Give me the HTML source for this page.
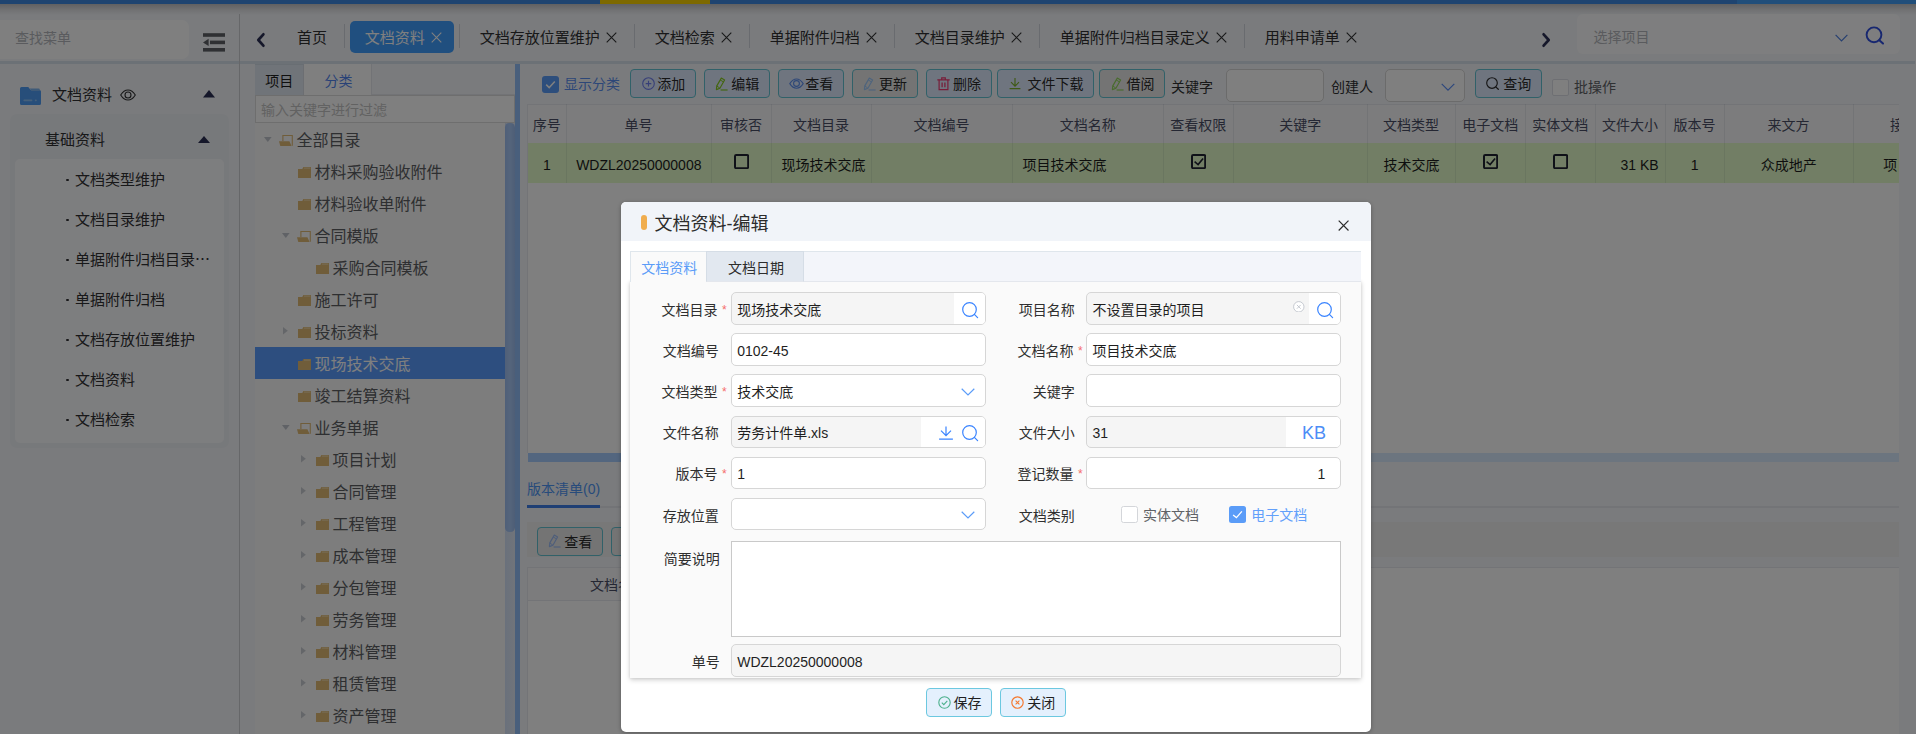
<!DOCTYPE html>
<html lang="zh-CN"><head><meta charset="utf-8"><title>文档资料</title>
<style>
html,body{margin:0;padding:0}
body{width:1916px;height:734px;overflow:hidden;position:relative;background:#f5f7fa;font-family:"Liberation Sans","Noto Sans CJK SC",sans-serif;}
#app,#dlg,#mask{position:absolute;left:0;top:0;width:1916px;height:734px;overflow:hidden}
#app div,#app svg,#app span.t,#dlg div,#dlg svg,#dlg span.t{position:absolute;box-sizing:border-box}
span.t{white-space:nowrap;display:block}
#mask{background:rgba(0,0,0,.5)}
.btn{border:1px solid #62c3d2;border-radius:4px;background:#dfeaff}
.inp{border:1px solid #d6d6d6;border-radius:5px;background:#fff}
.dis{background:#f5f5f5}

</style></head><body>
<div id="app">
<div style="left:0px;top:0px;width:1916px;height:4px;background:#3c88e0"></div>
<div style="left:600px;top:0px;width:110px;height:4px;background:#fad200"></div>
<div style="left:1737px;top:0px;width:179px;height:4px;background:#409cf4"></div>
<div style="left:0px;top:4px;width:1916px;height:11px;background:linear-gradient(rgba(0,0,0,.22),rgba(0,0,0,.08) 55%,rgba(0,0,0,0))"></div>
<div style="left:0px;top:20px;width:189px;height:39px;background:#fff;border-radius:0 7px 7px 0"></div>
<span class="t" style="top:28.49px;font-size:14px;line-height:20px;color:#b4b7bd;left:15px;">查找菜单</span>
<svg style="left:202px;top:32px;" width="24" height="21" viewBox="0 0 24 21"><g fill="#5e6166"><rect x="1" y="1.2" width="22" height="3.6"/><rect x="8" y="8.6" width="15" height="3.6"/><rect x="1" y="16" width="22" height="3.6"/><path d="M1 10.4 L6.6 6.8 V14z"/></g></svg>
<div style="left:0px;top:61px;width:1915px;height:3px;background:#d9e2ec"></div>
<div style="left:239px;top:14px;width:1.2px;height:720px;background:#cdced2"></div>
<svg style="left:20px;top:87px;" width="21" height="18" viewBox="0 0 21 18"><path fill="#4f9cf5" d="M1.500 0h6.800l2.300 3H19.500a1.500 1.500 0 0 1 1.500 1.500v12a1.500 1.500 0 0 1-1.500 1.500H1.500a1.500 1.500 0 0 1-1.500-1.500V1.500a1.500 1.500 0 0 1 1.500-1.500z"/><path fill="#7db4f0" d="M9.6 1.6h9a1.2 1.2 0 0 1 1.2 1.2V4H11.4z"/><rect x="3.4" y="12.6" width="9" height="1.6" rx=".8" fill="#8cc0f5"/><rect x="14.8" y="12.6" width="2" height="1.6" rx=".8" fill="#8cc0f5"/></svg>
<span class="t" style="top:84.73px;font-size:15px;line-height:20px;color:#303133;left:52px;">文档资料</span>
<svg style="left:120px;top:88.5px;" width="16" height="12" viewBox="0 0 16 12"><g fill="none" stroke="#303133" stroke-width="1.1"><path d="M.7 6C3 2.2 5.6 1 8 1s5 1.2 7.3 5C13 9.800 10.400 11 8 11S3 9.800.7 6z"/><circle cx="8" cy="6" r="3"/></g></svg>
<svg style="left:203px;top:90px;" width="12" height="8" viewBox="0 0 12 8"><path fill="#2b2f54" d="M6 0L12 7.400H0z"/></svg>
<div style="left:10px;top:114px;width:219px;height:334px;background:#eff2f7;border-radius:7px"></div>
<span class="t" style="top:130.03px;font-size:15px;line-height:20px;color:#303133;left:45px;">基础资料</span>
<svg style="left:198px;top:135.5px;" width="12" height="8" viewBox="0 0 12 8"><path fill="#2b2f54" d="M6 0L12 7H0z"/></svg>
<div style="left:15px;top:159px;width:209px;height:284px;background:#fbfcfe;border-radius:5px"></div>
<div style="left:66.2px;top:178.70000000000002px;width:2.4px;height:2.4px;background:#303133;border-radius:50%"></div>
<span class="t" style="top:169.83px;font-size:15px;line-height:20px;color:#303133;left:75px;">文档类型维护</span>
<div style="left:66.2px;top:218.70000000000002px;width:2.4px;height:2.4px;background:#303133;border-radius:50%"></div>
<span class="t" style="top:209.83px;font-size:15px;line-height:20px;color:#303133;left:75px;">文档目录维护</span>
<div style="left:66.2px;top:258.7px;width:2.4px;height:2.4px;background:#303133;border-radius:50%"></div>
<span class="t" style="top:249.83px;font-size:15px;line-height:20px;color:#303133;left:75px;">单据附件归档目录⋯</span>
<div style="left:66.2px;top:298.7px;width:2.4px;height:2.4px;background:#303133;border-radius:50%"></div>
<span class="t" style="top:289.82px;font-size:15px;line-height:20px;color:#303133;left:75px;">单据附件归档</span>
<div style="left:66.2px;top:338.7px;width:2.4px;height:2.4px;background:#303133;border-radius:50%"></div>
<span class="t" style="top:329.82px;font-size:15px;line-height:20px;color:#303133;left:75px;">文档存放位置维护</span>
<div style="left:66.2px;top:378.7px;width:2.4px;height:2.4px;background:#303133;border-radius:50%"></div>
<span class="t" style="top:369.82px;font-size:15px;line-height:20px;color:#303133;left:75px;">文档资料</span>
<div style="left:66.2px;top:418.7px;width:2.4px;height:2.4px;background:#303133;border-radius:50%"></div>
<span class="t" style="top:409.82px;font-size:15px;line-height:20px;color:#303133;left:75px;">文档检索</span>
<svg style="left:255px;top:32px;" width="12" height="16" viewBox="0 0 12 16"><path d="M8.400 2.300L3.300 8l5.100 5.700" fill="none" stroke="#2b2f54" stroke-width="2.700" stroke-linecap="round" stroke-linejoin="round"/></svg>
<svg style="left:1540px;top:32px;" width="12" height="16" viewBox="0 0 12 16"><path d="M3.600 2.300L8.700 8l-5.100 5.700" fill="none" stroke="#2b2f54" stroke-width="2.700" stroke-linecap="round" stroke-linejoin="round"/></svg>
<span class="t" style="top:28.12px;font-size:15px;line-height:20px;color:#303133;left:297.0px;">首页</span>
<div style="left:344.0px;top:24px;width:1px;height:24px;background:#d3d7de"></div>
<div style="left:350.0px;top:21px;width:104px;height:32px;background:#409eff;border-radius:5px"></div>
<span class="t" style="top:28.12px;font-size:15px;line-height:20px;color:#fff;left:364.79999999999995px;">文档资料</span>
<svg style="left:430.59999999999997px;top:32.2px;" width="11" height="11" viewBox="0 0 11 11"><path d="M.7.7l9.600 9.600M10.300.7L.7 10.300" stroke="#fff" stroke-width="1.100" fill="none"/></svg>
<div style="left:459.0px;top:24px;width:1px;height:24px;background:#d3d7de"></div>
<span class="t" style="top:28.12px;font-size:15px;line-height:20px;color:#303133;left:479.79999999999995px;">文档存放位置维护</span>
<svg style="left:605.5999999999999px;top:32.2px;" width="11" height="11" viewBox="0 0 11 11"><path d="M.7.7l9.600 9.600M10.300.7L.7 10.300" stroke="#303133" stroke-width="1.100" fill="none"/></svg>
<div style="left:634.0px;top:24px;width:1px;height:24px;background:#d3d7de"></div>
<span class="t" style="top:28.12px;font-size:15px;line-height:20px;color:#303133;left:654.8px;">文档检索</span>
<svg style="left:720.5999999999999px;top:32.2px;" width="11" height="11" viewBox="0 0 11 11"><path d="M.7.7l9.600 9.600M10.300.7L.7 10.300" stroke="#303133" stroke-width="1.100" fill="none"/></svg>
<div style="left:749.0px;top:24px;width:1px;height:24px;background:#d3d7de"></div>
<span class="t" style="top:28.12px;font-size:15px;line-height:20px;color:#303133;left:769.8px;">单据附件归档</span>
<svg style="left:865.5999999999999px;top:32.2px;" width="11" height="11" viewBox="0 0 11 11"><path d="M.7.7l9.600 9.600M10.300.7L.7 10.300" stroke="#303133" stroke-width="1.100" fill="none"/></svg>
<div style="left:894.0px;top:24px;width:1px;height:24px;background:#d3d7de"></div>
<span class="t" style="top:28.12px;font-size:15px;line-height:20px;color:#303133;left:914.8px;">文档目录维护</span>
<svg style="left:1010.5999999999999px;top:32.2px;" width="11" height="11" viewBox="0 0 11 11"><path d="M.7.7l9.600 9.600M10.300.7L.7 10.300" stroke="#303133" stroke-width="1.100" fill="none"/></svg>
<div style="left:1039.0px;top:24px;width:1px;height:24px;background:#d3d7de"></div>
<span class="t" style="top:28.12px;font-size:15px;line-height:20px;color:#303133;left:1059.8000000000002px;">单据附件归档目录定义</span>
<svg style="left:1215.6000000000001px;top:32.2px;" width="11" height="11" viewBox="0 0 11 11"><path d="M.7.7l9.600 9.600M10.300.7L.7 10.300" stroke="#303133" stroke-width="1.100" fill="none"/></svg>
<div style="left:1244.0px;top:24px;width:1px;height:24px;background:#d3d7de"></div>
<span class="t" style="top:28.12px;font-size:15px;line-height:20px;color:#303133;left:1264.8000000000002px;">用料申请单</span>
<svg style="left:1345.6000000000001px;top:32.2px;" width="11" height="11" viewBox="0 0 11 11"><path d="M.7.7l9.600 9.600M10.300.7L.7 10.300" stroke="#303133" stroke-width="1.100" fill="none"/></svg>
<div style="left:1577px;top:14px;width:323px;height:40px;background:#fff;border-radius:6px;opacity:.75"></div>
<span class="t" style="top:27.49px;font-size:14px;line-height:20px;color:#b4b7bd;left:1593.5px;">选择项目</span>
<svg style="left:1835px;top:33.5px;" width="13" height="8" viewBox="0 0 13 8"><path d="M.6.8L6.500 6.800 12.400.8" fill="none" stroke="#4d7fe0" stroke-width="1.200"/></svg>
<svg style="left:1865px;top:26px;" width="20" height="19" viewBox="0 0 20 19"><circle cx="9" cy="8.800" r="7.400" fill="none" stroke="#2f4ee0" stroke-width="1.900"/><path d="M14.300 14.200L18 17.600" stroke="#2f4ee0" stroke-width="2" stroke-linecap="round"/></svg>
<div style="left:255px;top:64px;width:260px;height:31px;background:#f5f7fa;border-bottom:1px solid #e4e7ed"></div>
<div style="left:255px;top:64px;width:48.5px;height:30.5px;background:#e1e9f2;border-right:1px solid #d8dde5;border-top:1px solid #d3dce6"></div>
<span class="t" style="top:71.09px;font-size:14px;line-height:20px;color:#1f1f1f;left:265.2px;">项目</span>
<div style="left:303.5px;top:64px;width:68.5px;height:30.5px;background:#fff;border-right:1px solid #e4e7ed"></div>
<span class="t" style="top:71.09px;font-size:14px;line-height:20px;color:#5284ee;left:324.5px;">分类</span>
<div style="left:255px;top:123px;width:250px;height:611px;background:#fafafa"></div>
<div style="left:255px;top:95px;width:260px;height:28px;background:#fff;border:1px solid #dcdcdc"></div>
<span class="t" style="top:100.49px;font-size:14px;line-height:20px;color:#c4c4c4;left:261px;">输入关键字进行过滤</span>
<div style="left:505px;top:123px;width:10px;height:611px;background:linear-gradient(90deg,#d4e2f8,#e2e9f5)"></div>
<div style="left:505.2px;top:123px;width:9.4px;height:408.6px;background:linear-gradient(90deg,#a0c0f2,#aacaf8 50%,#9cbcee);border-radius:4.5px"></div>
<div style="left:515px;top:64px;width:5px;height:670px;background:#93bff8"></div>
<svg style="left:263.8px;top:137.29999999999998px;" width="8" height="5.5" viewBox="0 0 8 5.5"><path fill="#c0c4cc" d="M0 0h7.600L3.800 5z"/></svg>
<svg style="left:279.1px;top:135.0px;" width="14.2" height="11" viewBox="0 0 14.2 11"><path fill="none" stroke="#e0ba74" stroke-width="1.100" d="M3.900 6V.55h9.400v10.200"/><path fill="#e0ba74" d="M0 6.200h10.400l2.200 4.700H1.300z"/></svg>
<span class="t" style="top:129.96px;font-size:16px;line-height:22px;color:#5c5e62;left:296.4px;">全部目录</span>
<svg style="left:298.09999999999997px;top:167.1px;" width="13.2" height="11" viewBox="0 0 13.2 11"><path fill="#e0ba74" d="M0 2.100h4.300L5.400 0H13v10.900H0z"/><rect x="6" y=".55" width="6.400" height="1.050" fill="#f0dcb0"/></svg>
<span class="t" style="top:161.96px;font-size:16px;line-height:22px;color:#5c5e62;left:314.4px;">材料采购验收附件</span>
<svg style="left:298.09999999999997px;top:199.1px;" width="13.2" height="11" viewBox="0 0 13.2 11"><path fill="#e0ba74" d="M0 2.100h4.300L5.400 0H13v10.900H0z"/><rect x="6" y=".55" width="6.400" height="1.050" fill="#f0dcb0"/></svg>
<span class="t" style="top:193.96px;font-size:16px;line-height:22px;color:#5c5e62;left:314.4px;">材料验收单附件</span>
<svg style="left:281.8px;top:233.29999999999998px;" width="8" height="5.5" viewBox="0 0 8 5.5"><path fill="#c0c4cc" d="M0 0h7.600L3.800 5z"/></svg>
<svg style="left:297.1px;top:231.0px;" width="14.2" height="11" viewBox="0 0 14.2 11"><path fill="none" stroke="#e0ba74" stroke-width="1.100" d="M3.900 6V.55h9.400v10.200"/><path fill="#e0ba74" d="M0 6.200h10.400l2.200 4.700H1.300z"/></svg>
<span class="t" style="top:225.96px;font-size:16px;line-height:22px;color:#5c5e62;left:314.4px;">合同模版</span>
<svg style="left:316.09999999999997px;top:263.09999999999997px;" width="13.2" height="11" viewBox="0 0 13.2 11"><path fill="#e0ba74" d="M0 2.100h4.300L5.400 0H13v10.900H0z"/><rect x="6" y=".55" width="6.400" height="1.050" fill="#f0dcb0"/></svg>
<span class="t" style="top:257.96px;font-size:16px;line-height:22px;color:#5c5e62;left:332.4px;">采购合同模板</span>
<svg style="left:298.09999999999997px;top:295.09999999999997px;" width="13.2" height="11" viewBox="0 0 13.2 11"><path fill="#e0ba74" d="M0 2.100h4.300L5.400 0H13v10.900H0z"/><rect x="6" y=".55" width="6.400" height="1.050" fill="#f0dcb0"/></svg>
<span class="t" style="top:289.96px;font-size:16px;line-height:22px;color:#5c5e62;left:314.4px;">施工许可</span>
<svg style="left:283.4px;top:326.7px;" width="5.5" height="8" viewBox="0 0 5.5 8"><path fill="#c9ccd3" d="M0 0v7.600L4.800 3.800z"/></svg>
<svg style="left:298.09999999999997px;top:327.09999999999997px;" width="13.2" height="11" viewBox="0 0 13.2 11"><path fill="#e0ba74" d="M0 2.100h4.300L5.400 0H13v10.900H0z"/><rect x="6" y=".55" width="6.400" height="1.050" fill="#f0dcb0"/></svg>
<span class="t" style="top:321.96px;font-size:16px;line-height:22px;color:#5c5e62;left:314.4px;">投标资料</span>
<div style="left:255px;top:347.09999999999997px;width:250px;height:31.6px;background:#5a9cff"></div>
<svg style="left:298.09999999999997px;top:359.09999999999997px;" width="13.2" height="11" viewBox="0 0 13.2 11"><path fill="#e0ba74" d="M0 2.100h4.300L5.400 0H13v10.900H0z"/><rect x="6" y=".55" width="6.400" height="1.050" fill="#f0dcb0"/></svg>
<span class="t" style="top:353.96px;font-size:16px;line-height:22px;color:#fff;left:314.4px;">现场技术交底</span>
<svg style="left:298.09999999999997px;top:391.09999999999997px;" width="13.2" height="11" viewBox="0 0 13.2 11"><path fill="#e0ba74" d="M0 2.100h4.300L5.400 0H13v10.900H0z"/><rect x="6" y=".55" width="6.400" height="1.050" fill="#f0dcb0"/></svg>
<span class="t" style="top:385.96px;font-size:16px;line-height:22px;color:#5c5e62;left:314.4px;">竣工结算资料</span>
<svg style="left:281.8px;top:425.3px;" width="8" height="5.5" viewBox="0 0 8 5.5"><path fill="#c0c4cc" d="M0 0h7.600L3.800 5z"/></svg>
<svg style="left:297.1px;top:423.0px;" width="14.2" height="11" viewBox="0 0 14.2 11"><path fill="none" stroke="#e0ba74" stroke-width="1.100" d="M3.900 6V.55h9.400v10.200"/><path fill="#e0ba74" d="M0 6.200h10.400l2.200 4.700H1.300z"/></svg>
<span class="t" style="top:417.96px;font-size:16px;line-height:22px;color:#5c5e62;left:314.4px;">业务单据</span>
<svg style="left:301.4px;top:454.7px;" width="5.5" height="8" viewBox="0 0 5.5 8"><path fill="#c9ccd3" d="M0 0v7.600L4.800 3.800z"/></svg>
<svg style="left:316.09999999999997px;top:455.09999999999997px;" width="13.2" height="11" viewBox="0 0 13.2 11"><path fill="#e0ba74" d="M0 2.100h4.300L5.400 0H13v10.900H0z"/><rect x="6" y=".55" width="6.400" height="1.050" fill="#f0dcb0"/></svg>
<span class="t" style="top:449.96px;font-size:16px;line-height:22px;color:#5c5e62;left:332.4px;">项目计划</span>
<svg style="left:301.4px;top:486.7px;" width="5.5" height="8" viewBox="0 0 5.5 8"><path fill="#c9ccd3" d="M0 0v7.600L4.800 3.800z"/></svg>
<svg style="left:316.09999999999997px;top:487.09999999999997px;" width="13.2" height="11" viewBox="0 0 13.2 11"><path fill="#e0ba74" d="M0 2.100h4.300L5.400 0H13v10.900H0z"/><rect x="6" y=".55" width="6.400" height="1.050" fill="#f0dcb0"/></svg>
<span class="t" style="top:481.96px;font-size:16px;line-height:22px;color:#5c5e62;left:332.4px;">合同管理</span>
<svg style="left:301.4px;top:518.7px;" width="5.5" height="8" viewBox="0 0 5.5 8"><path fill="#c9ccd3" d="M0 0v7.600L4.800 3.800z"/></svg>
<svg style="left:316.09999999999997px;top:519.1px;" width="13.2" height="11" viewBox="0 0 13.2 11"><path fill="#e0ba74" d="M0 2.100h4.300L5.400 0H13v10.900H0z"/><rect x="6" y=".55" width="6.400" height="1.050" fill="#f0dcb0"/></svg>
<span class="t" style="top:513.96px;font-size:16px;line-height:22px;color:#5c5e62;left:332.4px;">工程管理</span>
<svg style="left:301.4px;top:550.7px;" width="5.5" height="8" viewBox="0 0 5.5 8"><path fill="#c9ccd3" d="M0 0v7.600L4.800 3.800z"/></svg>
<svg style="left:316.09999999999997px;top:551.1px;" width="13.2" height="11" viewBox="0 0 13.2 11"><path fill="#e0ba74" d="M0 2.100h4.300L5.400 0H13v10.900H0z"/><rect x="6" y=".55" width="6.400" height="1.050" fill="#f0dcb0"/></svg>
<span class="t" style="top:545.96px;font-size:16px;line-height:22px;color:#5c5e62;left:332.4px;">成本管理</span>
<svg style="left:301.4px;top:582.7px;" width="5.5" height="8" viewBox="0 0 5.5 8"><path fill="#c9ccd3" d="M0 0v7.600L4.800 3.800z"/></svg>
<svg style="left:316.09999999999997px;top:583.1px;" width="13.2" height="11" viewBox="0 0 13.2 11"><path fill="#e0ba74" d="M0 2.100h4.300L5.400 0H13v10.900H0z"/><rect x="6" y=".55" width="6.400" height="1.050" fill="#f0dcb0"/></svg>
<span class="t" style="top:577.96px;font-size:16px;line-height:22px;color:#5c5e62;left:332.4px;">分包管理</span>
<svg style="left:301.4px;top:614.7px;" width="5.5" height="8" viewBox="0 0 5.5 8"><path fill="#c9ccd3" d="M0 0v7.600L4.800 3.800z"/></svg>
<svg style="left:316.09999999999997px;top:615.1px;" width="13.2" height="11" viewBox="0 0 13.2 11"><path fill="#e0ba74" d="M0 2.100h4.300L5.400 0H13v10.900H0z"/><rect x="6" y=".55" width="6.400" height="1.050" fill="#f0dcb0"/></svg>
<span class="t" style="top:609.96px;font-size:16px;line-height:22px;color:#5c5e62;left:332.4px;">劳务管理</span>
<svg style="left:301.4px;top:646.7px;" width="5.5" height="8" viewBox="0 0 5.5 8"><path fill="#c9ccd3" d="M0 0v7.600L4.800 3.800z"/></svg>
<svg style="left:316.09999999999997px;top:647.1px;" width="13.2" height="11" viewBox="0 0 13.2 11"><path fill="#e0ba74" d="M0 2.100h4.300L5.400 0H13v10.900H0z"/><rect x="6" y=".55" width="6.400" height="1.050" fill="#f0dcb0"/></svg>
<span class="t" style="top:641.96px;font-size:16px;line-height:22px;color:#5c5e62;left:332.4px;">材料管理</span>
<svg style="left:301.4px;top:678.7px;" width="5.5" height="8" viewBox="0 0 5.5 8"><path fill="#c9ccd3" d="M0 0v7.600L4.800 3.800z"/></svg>
<svg style="left:316.09999999999997px;top:679.1px;" width="13.2" height="11" viewBox="0 0 13.2 11"><path fill="#e0ba74" d="M0 2.100h4.300L5.400 0H13v10.900H0z"/><rect x="6" y=".55" width="6.400" height="1.050" fill="#f0dcb0"/></svg>
<span class="t" style="top:673.96px;font-size:16px;line-height:22px;color:#5c5e62;left:332.4px;">租赁管理</span>
<svg style="left:301.4px;top:710.7px;" width="5.5" height="8" viewBox="0 0 5.5 8"><path fill="#c9ccd3" d="M0 0v7.600L4.800 3.800z"/></svg>
<svg style="left:316.09999999999997px;top:711.1px;" width="13.2" height="11" viewBox="0 0 13.2 11"><path fill="#e0ba74" d="M0 2.100h4.300L5.400 0H13v10.900H0z"/><rect x="6" y=".55" width="6.400" height="1.050" fill="#f0dcb0"/></svg>
<span class="t" style="top:705.96px;font-size:16px;line-height:22px;color:#5c5e62;left:332.4px;">资产管理</span>
<div style="left:542px;top:76px;width:17px;height:17px;background:#5a9cf8;border-radius:3px"></div>
<svg style="left:545px;top:80px;" width="11" height="9" viewBox="0 0 11 9"><path d="M1.200 4.600l3 3L9.800 1.400" fill="none" stroke="#fff" stroke-width="1.500"/></svg>
<span class="t" style="top:74.49px;font-size:14px;line-height:20px;color:#5a8ff0;left:564px;">显示分类</span>
<div class="btn" style="left:630.2px;top:69.2px;width:65.7px;height:28.6px;"></div>
<svg style="left:641.8000000000001px;top:77.0px" width="13" height="13" viewBox="0 0 13 13"><circle cx="6.500" cy="6.600" r="5.800" fill="none" stroke="#6f7ff0" stroke-width="1.100"/><path d="M6.500 3.800v5.600M3.700 6.600h5.600" stroke="#6f7ff0" stroke-width="1.100"/></svg>
<span class="t" style="top:74.09px;font-size:14px;line-height:20px;color:#2b2b2b;left:657.3000000000001px;">添加</span>
<div class="btn" style="left:704.1px;top:69.2px;width:65.7px;height:28.6px;"></div>
<svg style="left:715.4px;top:76.5px" width="14" height="14" viewBox="0 0 14 14"><path d="M6.300 1.100l3.300 1.900-4.700 8.200-3.500 1.400.4-3.700z" fill="none" stroke="#86cc1e" stroke-width="1.150" stroke-linejoin="round"/><path d="M5.200 3l3.300 1.900M1.800 8.900l3.100 2.300" fill="none" stroke="#86cc1e" stroke-width="1"/><path d="M5.600 13h7" stroke="#86cc1e" stroke-width="1.150"/></svg>
<span class="t" style="top:74.09px;font-size:14px;line-height:20px;color:#2b2b2b;left:731.2px;">编辑</span>
<div class="btn" style="left:778.1px;top:69.2px;width:65.7px;height:28.6px;"></div>
<svg style="left:788.8000000000001px;top:78.1px" width="15" height="11" viewBox="0 0 15 11"><g fill="none" stroke="#5b8ff0" stroke-width="1.100"><path d="M.8 5.600C2.900 2.300 5.200 1 7.500 1s4.600 1.300 6.700 4.600C12.100 8.900 9.800 10.200 7.500 10.200S2.900 8.900.8 5.600z"/><circle cx="7.500" cy="5.500" r="2.900"/></g></svg>
<span class="t" style="top:74.09px;font-size:14px;line-height:20px;color:#2b2b2b;left:805.2px;">查看</span>
<div class="btn" style="left:852px;top:69.2px;width:65.7px;height:28.6px;background:#e8e8e8"></div>
<svg style="left:863.4px;top:76.5px" width="14" height="14" viewBox="0 0 14 14"><path d="M6.300 1.100l3.300 1.900-4.700 8.200-3.500 1.400.4-3.700z" fill="none" stroke="#9cc8fa" stroke-width="1.150" stroke-linejoin="round"/><path d="M5.200 3l3.300 1.900M1.800 8.900l3.100 2.300" fill="none" stroke="#9cc8fa" stroke-width="1"/><path d="M5.600 13h7" stroke="#9cc8fa" stroke-width="1.150"/></svg>
<span class="t" style="top:74.09px;font-size:14px;line-height:20px;color:#2b2b2b;left:879.1px;">更新</span>
<div class="btn" style="left:925.9px;top:69.2px;width:65.7px;height:28.6px;"></div>
<svg style="left:937.3px;top:76.8px" width="13" height="14" viewBox="0 0 13 14"><g fill="none" stroke="#f03a72" stroke-width="1.200"><path d="M.3 2.900h12.400M4.700 2.600V.9h3.600v1.700M2.100 3.200v9.400h8.800V3.200"/><path d="M5.100 5.400v4.800M7.900 5.400v4.800" stroke-width="1.300"/></g></svg>
<span class="t" style="top:74.09px;font-size:14px;line-height:20px;color:#2b2b2b;left:953.0px;">删除</span>
<div class="btn" style="left:997.1px;top:69.2px;width:96.5px;height:28.6px;"></div>
<svg style="left:1008.6px;top:77.0px" width="12.0" height="13.0" viewBox="0 0 12 13"><g fill="none" stroke="#7fb32a" stroke-width="1.150"><path d="M6 1v8.200M2 5.200l4 4 4-4M.6 11.600h10.800"/></g></svg>
<span class="t" style="top:74.09px;font-size:14px;line-height:20px;color:#2b2b2b;left:1027.6px;">文件下载</span>
<div class="btn" style="left:1099.3px;top:69.2px;width:65.6px;height:28.6px;background:#e8e8e8"></div>
<svg style="left:1110.6000000000001px;top:76.5px" width="14" height="14" viewBox="0 0 14 14"><path d="M6.300 1.100l3.300 1.900-4.700 8.200-3.500 1.400.4-3.700z" fill="none" stroke="#93d85c" stroke-width="1.150" stroke-linejoin="round"/><path d="M5.200 3l3.300 1.900M1.800 8.900l3.100 2.300" fill="none" stroke="#93d85c" stroke-width="1"/><path d="M5.600 13h7" stroke="#93d85c" stroke-width="1.150"/></svg>
<span class="t" style="top:74.09px;font-size:14px;line-height:20px;color:#2b2b2b;left:1126.3999999999999px;">借阅</span>
<span class="t" style="top:77.29px;font-size:14px;line-height:20px;color:#303133;left:1171px;">关键字</span>
<div class="inp" style="left:1226px;top:69px;width:98px;height:33px;background:#fff"></div>
<span class="t" style="top:77.29px;font-size:14px;line-height:20px;color:#303133;left:1331px;">创建人</span>
<div class="inp" style="left:1385px;top:69px;width:79.5px;height:33px;background:#fff"></div>
<svg style="left:1440.5px;top:83px;" width="14" height="8.5" viewBox="0 0 14 8.5"><path d="M.7.8L7 7.200 13.300.8" fill="none" stroke="#5b8ff9" stroke-width="1.200"/></svg>
<div class="btn" style="left:1475.2px;top:69.2px;width:66.4px;height:28.6px;"></div>
<svg style="left:1486.2px;top:77.0px" width="13" height="13" viewBox="0 0 13 13"><circle cx="6" cy="6" r="5.300" fill="none" stroke="#2b2b2b" stroke-width="1.15"/><path d="M10 10.100l2.300 2.200" stroke="#2b2b2b" stroke-width="1.25" stroke-linecap="round"/></svg>
<span class="t" style="top:74.09px;font-size:14px;line-height:20px;color:#2b2b2b;left:1503.3px;">查询</span>
<div style="left:1552px;top:79px;width:16.5px;height:16.5px;background:#fff;border:1px solid #dcdfe6;border-radius:2px"></div>
<span class="t" style="top:77.29px;font-size:14px;line-height:20px;color:#606266;left:1574px;">批操作</span>
<div style="left:527px;top:104px;width:1372px;height:349.4px;background:#fff;border:1px solid #e6e9ef;border-right:0;border-bottom:0"></div>
<div style="left:527px;top:104px;width:1372px;height:39.6px;background:#f8f9fb;border:1px solid #e6e9ef;border-right:0"></div>
<div style="left:528px;top:143.4px;width:1371px;height:40.1px;background:#e4fdcb"></div>
<div style="left:527px;top:104px;width:1372px;height:80px;overflow:hidden">
<span class="t" style="top:11.29px;font-size:14px;line-height:20px;color:#4b4f66;left:-180.34999999999997px;width:400px;text-align:center;">序号</span>
<div style="left:39px;top:0px;width:1px;height:79px;background:rgba(60,70,90,.085)"></div>
<span class="t" style="top:51.19px;font-size:14px;line-height:20px;color:#1d1d1d;left:-180.04999999999995px;width:400px;text-align:center;">1</span>
<span class="t" style="top:11.29px;font-size:14px;line-height:20px;color:#4b4f66;left:-88.50000000000004px;width:400px;text-align:center;">单号</span>
<div style="left:184px;top:0px;width:1px;height:79px;background:rgba(60,70,90,.085)"></div>
<span class="t" style="top:51.19px;font-size:14px;line-height:20px;color:#1d1d1d;left:-88.20000000000005px;width:400px;text-align:center;">WDZL20250000008</span>
<span class="t" style="top:11.29px;font-size:14px;line-height:20px;color:#4b4f66;left:14.049999999999898px;width:400px;text-align:center;">审核否</span>
<div style="left:244px;top:0px;width:1px;height:79px;background:rgba(60,70,90,.085)"></div>
<svg style="left:206.74999999999991px;top:50.2px;" width="15.2" height="15.2" viewBox="0 0 15.2 15.2"><rect x="1" y="1" width="13.200" height="13.200" rx="1.200" fill="none" stroke="#1f2230" stroke-width="2"/></svg>
<span class="t" style="top:11.29px;font-size:14px;line-height:20px;color:#4b4f66;left:94.09999999999997px;width:400px;text-align:center;">文档目录</span>
<div style="left:344px;top:0px;width:1px;height:79px;background:rgba(60,70,90,.085)"></div>
<span class="t" style="top:51.19px;font-size:14px;line-height:20px;color:#1d1d1d;left:254.39999999999998px;">现场技术交底</span>
<span class="t" style="top:11.29px;font-size:14px;line-height:20px;color:#4b4f66;left:214.59999999999997px;width:400px;text-align:center;">文档编号</span>
<div style="left:485px;top:0px;width:1px;height:79px;background:rgba(60,70,90,.085)"></div>
<span class="t" style="top:11.29px;font-size:14px;line-height:20px;color:#4b4f66;left:360.6500000000001px;width:400px;text-align:center;">文档名称</span>
<div style="left:636px;top:0px;width:1px;height:79px;background:rgba(60,70,90,.085)"></div>
<span class="t" style="top:51.19px;font-size:14px;line-height:20px;color:#1d1d1d;left:495.4px;">项目技术交底</span>
<span class="t" style="top:11.29px;font-size:14px;line-height:20px;color:#4b4f66;left:471.25px;width:400px;text-align:center;">查看权限</span>
<div style="left:706px;top:0px;width:1px;height:79px;background:rgba(60,70,90,.085)"></div>
<svg style="left:663.9499999999999px;top:50.2px;" width="15.2" height="15.2" viewBox="0 0 15.2 15.2"><rect x="1" y="1" width="13.200" height="13.200" rx="1.200" fill="none" stroke="#1f2230" stroke-width="2"/><path d="M3.600 7.700l3.500 2.900 5-6" fill="none" stroke="#1f2230" stroke-width="1.600"/></svg>
<span class="t" style="top:11.29px;font-size:14px;line-height:20px;color:#4b4f66;left:573.2px;width:400px;text-align:center;">关键字</span>
<div style="left:840px;top:0px;width:1px;height:79px;background:rgba(60,70,90,.085)"></div>
<span class="t" style="top:11.29px;font-size:14px;line-height:20px;color:#4b4f66;left:684.1000000000001px;width:400px;text-align:center;">文档类型</span>
<div style="left:928px;top:0px;width:1px;height:79px;background:rgba(60,70,90,.085)"></div>
<span class="t" style="top:51.19px;font-size:14px;line-height:20px;color:#1d1d1d;left:684.4000000000001px;width:400px;text-align:center;">技术交底</span>
<span class="t" style="top:11.29px;font-size:14px;line-height:20px;color:#4b4f66;left:763.1500000000001px;width:400px;text-align:center;">电子文档</span>
<div style="left:998px;top:0px;width:1px;height:79px;background:rgba(60,70,90,.085)"></div>
<svg style="left:955.85px;top:50.2px;" width="15.2" height="15.2" viewBox="0 0 15.2 15.2"><rect x="1" y="1" width="13.200" height="13.200" rx="1.200" fill="none" stroke="#1f2230" stroke-width="2"/><path d="M3.600 7.700l3.500 2.900 5-6" fill="none" stroke="#1f2230" stroke-width="1.600"/></svg>
<span class="t" style="top:11.29px;font-size:14px;line-height:20px;color:#4b4f66;left:833.1500000000001px;width:400px;text-align:center;">实体文档</span>
<div style="left:1068px;top:0px;width:1px;height:79px;background:rgba(60,70,90,.085)"></div>
<svg style="left:1025.8500000000001px;top:50.2px;" width="15.2" height="15.2" viewBox="0 0 15.2 15.2"><rect x="1" y="1" width="13.200" height="13.200" rx="1.200" fill="none" stroke="#1f2230" stroke-width="2"/></svg>
<span class="t" style="top:11.29px;font-size:14px;line-height:20px;color:#4b4f66;left:903.0000000000002px;width:400px;text-align:center;">文件大小</span>
<div style="left:1138px;top:0px;width:1px;height:79px;background:rgba(60,70,90,.085)"></div>
<span class="t" style="top:51.19px;font-size:14px;line-height:20px;color:#1d1d1d;left:731.7px;width:400px;text-align:right;">31 KB</span>
<span class="t" style="top:11.29px;font-size:14px;line-height:20px;color:#4b4f66;left:967.45px;width:400px;text-align:center;">版本号</span>
<div style="left:1197px;top:0px;width:1px;height:79px;background:rgba(60,70,90,.085)"></div>
<span class="t" style="top:51.19px;font-size:14px;line-height:20px;color:#1d1d1d;left:967.75px;width:400px;text-align:center;">1</span>
<span class="t" style="top:11.29px;font-size:14px;line-height:20px;color:#4b4f66;left:1061.55px;width:400px;text-align:center;">来文方</span>
<div style="left:1326px;top:0px;width:1px;height:79px;background:rgba(60,70,90,.085)"></div>
<span class="t" style="top:51.19px;font-size:14px;line-height:20px;color:#1d1d1d;left:1061.85px;width:400px;text-align:center;">众成地产</span>
<span class="t" style="top:11.29px;font-size:14px;line-height:20px;color:#4b4f66;left:1183.9px;width:400px;text-align:center;">接收方</span>
<div style="left:1442px;top:0px;width:1px;height:79px;background:rgba(60,70,90,.085)"></div>
<span class="t" style="top:51.19px;font-size:14px;line-height:20px;color:#1d1d1d;left:1184.2px;width:400px;text-align:center;">项目部门</span>
</div>
<div style="left:527.6px;top:453.4px;width:1371.6px;height:8.6px;background:linear-gradient(90deg,#a6ccff 0%,#a6ccff 8%,#d8eaff 58%,#d8eaff 100%)"></div>
<span class="t" style="top:479.09px;font-size:14px;line-height:20px;color:#4f96f6;left:527px;">版本清单(0)</span>
<div style="left:527px;top:506px;width:1372px;height:2px;background:#e6e9ef"></div>
<div style="left:527px;top:505.2px;width:73px;height:2.6px;background:#3f7fe8"></div>
<div style="left:527px;top:522px;width:1372px;height:35px;background:#f0f0f0"></div>
<div class="btn" style="left:537.2px;top:527.2px;width:65.6px;height:28.5px;background:#e8e8e8"></div>
<svg style="left:548.4px;top:534.4px" width="14" height="14" viewBox="0 0 14 14"><path d="M6.300 1.100l3.300 1.900-4.700 8.200-3.500 1.400.4-3.700z" fill="none" stroke="#9dbcf5" stroke-width="1.150" stroke-linejoin="round"/><path d="M5.200 3l3.300 1.900M1.800 8.900l3.100 2.300" fill="none" stroke="#9dbcf5" stroke-width="1"/><path d="M5.600 13h7" stroke="#9dbcf5" stroke-width="1.150"/></svg>
<span class="t" style="top:531.69px;font-size:14px;line-height:20px;color:#2b2b2b;left:564.2px;">查看</span>
<div class="btn" style="left:611px;top:527.2px;width:66px;height:28.5px;background:#e8e8e8"></div>
<div style="left:527px;top:567.4px;width:1372px;height:170px;background:#fff;border:1px solid #e6e9ef;border-right:0"></div>
<div style="left:527px;top:567.4px;width:700px;height:34px;background:#f8f9fb;border:1px solid #e6e9ef;border-right:0"></div>
<span class="t" style="top:574.89px;font-size:14px;line-height:20px;color:#4b4f66;left:590px;">文档名称</span>
</div>
<div id="mask"></div>
<div id="dlg">
<div style="left:621.2px;top:202px;width:749.6px;height:529.7px;background:#fff;border-radius:5px;box-shadow:0 1px 4px rgba(0,0,0,.3)"></div>
<div style="left:621.2px;top:202px;width:749.6px;height:39px;background:#f1f4f9;border-radius:5px 5px 0 0"></div>
<div style="left:641px;top:215px;width:5.6px;height:15px;background:#f0ad4e;border-radius:3px"></div>
<span class="t" style="top:212.13px;font-size:18px;line-height:24px;color:#2c2c2c;left:654.5px;">文档资料-编辑</span>
<svg style="left:1337.5px;top:219.5px;" width="11.2" height="11.2" viewBox="0 0 11.2 11.2"><path d="M.7.7l9.800 9.800M10.500.7L.7 10.500" stroke="#2c2c2c" stroke-width="1.200" fill="none"/></svg>
<div style="left:630.4px;top:281.4px;width:730.5px;height:397px;background:#fafafa;box-shadow:0 2px 5px rgba(0,0,0,.18),0 0 3px rgba(0,0,0,.1)"></div>
<div style="left:630.4px;top:251.3px;width:730.5px;height:30.3px;background:#f3f5fa;border-top:1px solid #dfe6ec;border-bottom:1px solid #e4e7ed"></div>
<div style="left:630.4px;top:251.3px;width:76px;height:30.4px;background:#fafafa;border-left:1px solid #dfe6ec;border-top:1px solid #dfe6ec"></div>
<div style="left:706.3px;top:251.3px;width:98px;height:30.3px;background:#e2e8f0;border:1px solid #d5dde6;border-bottom-color:#e4e7ed"></div>
<span class="t" style="top:258.49px;font-size:14px;line-height:20px;color:#5b9cf8;left:641.2px;">文档资料</span>
<span class="t" style="top:258.49px;font-size:14px;line-height:20px;color:#2c2c2c;left:728px;">文档日期</span>
<span class="t" style="top:300.19px;font-size:14px;line-height:20px;color:#2f2f2f;left:317.6px;width:400px;text-align:right;">文档目录</span>
<span class="t" style="top:299.72px;font-size:12px;line-height:20px;color:#f56c6c;left:722.0px;">*</span>
<span class="t" style="top:300.19px;font-size:14px;line-height:20px;color:#2f2f2f;left:674.6999999999998px;width:400px;text-align:right;">项目名称</span>
<span class="t" style="top:341.26px;font-size:14px;line-height:20px;color:#2f2f2f;left:318.70000000000005px;width:400px;text-align:right;">文档编号</span>
<span class="t" style="top:341.26px;font-size:14px;line-height:20px;color:#2f2f2f;left:673.5999999999999px;width:400px;text-align:right;">文档名称</span>
<span class="t" style="top:340.79px;font-size:12px;line-height:20px;color:#f56c6c;left:1078.0px;">*</span>
<span class="t" style="top:382.33px;font-size:14px;line-height:20px;color:#2f2f2f;left:317.6px;width:400px;text-align:right;">文档类型</span>
<span class="t" style="top:381.86px;font-size:12px;line-height:20px;color:#f56c6c;left:722.0px;">*</span>
<span class="t" style="top:382.33px;font-size:14px;line-height:20px;color:#2f2f2f;left:674.6999999999998px;width:400px;text-align:right;">关键字</span>
<span class="t" style="top:423.40px;font-size:14px;line-height:20px;color:#2f2f2f;left:318.70000000000005px;width:400px;text-align:right;">文件名称</span>
<span class="t" style="top:423.40px;font-size:14px;line-height:20px;color:#2f2f2f;left:674.6999999999998px;width:400px;text-align:right;">文件大小</span>
<span class="t" style="top:464.47px;font-size:14px;line-height:20px;color:#2f2f2f;left:317.6px;width:400px;text-align:right;">版本号</span>
<span class="t" style="top:464.00px;font-size:12px;line-height:20px;color:#f56c6c;left:722.0px;">*</span>
<span class="t" style="top:464.47px;font-size:14px;line-height:20px;color:#2f2f2f;left:673.5999999999999px;width:400px;text-align:right;">登记数量</span>
<span class="t" style="top:464.00px;font-size:12px;line-height:20px;color:#f56c6c;left:1078.0px;">*</span>
<span class="t" style="top:505.54px;font-size:14px;line-height:20px;color:#2f2f2f;left:318.70000000000005px;width:400px;text-align:right;">存放位置</span>
<span class="t" style="top:505.54px;font-size:14px;line-height:20px;color:#2f2f2f;left:674.6999999999998px;width:400px;text-align:right;">文档类别</span>
<div class="inp dis" style="left:731.2px;top:292.3px;width:254.4px;height:32.8px;"></div>
<div style="left:953.9px;top:293.3px;width:30.7px;height:30.799999999999997px;background:#fff;border-radius:0 4px 4px 0"></div>
<span class="t" style="top:299.79px;font-size:14px;line-height:20px;color:#1f1f1f;left:737.2px;">现场技术交底</span>
<svg style="left:961.0px;top:301.1px;" width="18" height="18" viewBox="0 0 18 18"><circle cx="8.500" cy="8.500" r="6.800" fill="none" stroke="#3a84ff" stroke-width="1.200"/><path d="M13.400 13.400l3.200 3.200" stroke="#3a84ff" stroke-width="1.200" stroke-linecap="round"/></svg>
<div class="inp dis" style="left:1086.4px;top:292.3px;width:254.4px;height:32.8px;"></div>
<div style="left:1309.1000000000001px;top:293.3px;width:30.7px;height:30.799999999999997px;background:#fff;border-radius:0 4px 4px 0"></div>
<span class="t" style="top:299.79px;font-size:14px;line-height:20px;color:#1f1f1f;left:1092.4px;">不设置目录的项目</span>
<svg style="left:1316.2px;top:301.1px;" width="18" height="18" viewBox="0 0 18 18"><circle cx="8.500" cy="8.500" r="6.800" fill="none" stroke="#3a84ff" stroke-width="1.200"/><path d="M13.400 13.400l3.200 3.200" stroke="#3a84ff" stroke-width="1.200" stroke-linecap="round"/></svg>
<svg style="left:1293.2px;top:300.90000000000003px;" width="11.6" height="11.6" viewBox="0 0 11.6 11.6"><circle cx="5.800" cy="5.800" r="5.200" fill="#fff" stroke="#c0c4cc" stroke-width=".9"/><path d="M3.900 3.900l3.800 3.800M7.700 3.900L3.900 7.700" stroke="#c0c4cc" stroke-width=".9"/></svg>
<div class="inp" style="left:731.2px;top:333.37px;width:254.4px;height:32.8px;"></div>
<span class="t" style="top:340.86px;font-size:14px;line-height:20px;color:#1f1f1f;left:737.2px;">0102-45</span>
<div class="inp" style="left:1086.4px;top:333.37px;width:254.4px;height:32.8px;"></div>
<span class="t" style="top:340.86px;font-size:14px;line-height:20px;color:#1f1f1f;left:1092.4px;">项目技术交底</span>
<div class="inp" style="left:731.2px;top:374.44px;width:254.4px;height:32.8px;"></div>
<span class="t" style="top:381.93px;font-size:14px;line-height:20px;color:#1f1f1f;left:737.2px;">技术交底</span>
<svg style="left:961.2px;top:387.53999999999996px;" width="14" height="8.5" viewBox="0 0 14 8.5"><path d="M.7.8L7 7 13.300.8" fill="none" stroke="#5b9cf8" stroke-width="1.200"/></svg>
<div class="inp" style="left:1086.4px;top:374.44px;width:254.4px;height:32.8px;"></div>
<div class="inp dis" style="left:731.2px;top:415.51px;width:254.4px;height:32.8px;"></div>
<div style="left:921.0px;top:416.51px;width:63.6px;height:30.799999999999997px;background:#fff;border-radius:0 4px 4px 0"></div>
<span class="t" style="top:423.00px;font-size:14px;line-height:20px;color:#1f1f1f;left:737.2px;">劳务计件单.xls</span>
<svg style="left:938.1px;top:425.71px;" width="16" height="15" viewBox="0 0 16 15"><g fill="none" stroke="#3a84ff" stroke-width="1.200"><path d="M8 .4v9.300M3 4.700l5 5 5-5M1.100 13.100h13.800"/></g></svg>
<svg style="left:961.0px;top:424.31px;" width="18" height="18" viewBox="0 0 18 18"><circle cx="8.500" cy="8.500" r="6.800" fill="none" stroke="#3a84ff" stroke-width="1.200"/><path d="M13.400 13.400l3.200 3.200" stroke="#3a84ff" stroke-width="1.200" stroke-linecap="round"/></svg>
<div class="inp dis" style="left:1086.4px;top:415.51px;width:254.4px;height:32.8px;"></div>
<div style="left:1285.8000000000002px;top:416.51px;width:54px;height:30.799999999999997px;background:#fff;border-radius:0 4px 4px 0"></div>
<span class="t" style="top:423.00px;font-size:14px;line-height:20px;color:#1f1f1f;left:1092.4px;">31</span>
<span class="t" style="top:421.44px;font-size:18px;line-height:24px;color:#4c8df6;left:1302px;">KB</span>
<div class="inp" style="left:731.2px;top:456.58000000000004px;width:254.4px;height:32.8px;"></div>
<span class="t" style="top:464.07px;font-size:14px;line-height:20px;color:#1f1f1f;left:737.2px;">1</span>
<div class="inp" style="left:1086.4px;top:456.58000000000004px;width:254.4px;height:32.8px;"></div>
<span class="t" style="top:464.07px;font-size:14px;line-height:20px;color:#1f1f1f;left:925.3000000000002px;width:400px;text-align:right;">1</span>
<div class="inp" style="left:731.2px;top:497.65px;width:254.4px;height:32.8px;"></div>
<svg style="left:961.2px;top:510.75px;" width="14" height="8.5" viewBox="0 0 14 8.5"><path d="M.7.8L7 7 13.300.8" fill="none" stroke="#5b9cf8" stroke-width="1.200"/></svg>
<div style="left:1121.2px;top:506.2px;width:16.5px;height:16.5px;background:#fff;border:1px solid #d4d6da;border-radius:2.5px"></div>
<span class="t" style="top:504.89px;font-size:14px;line-height:20px;color:#606266;left:1143px;">实体文档</span>
<div style="left:1229.2px;top:506.2px;width:16.5px;height:16.5px;background:#5a9cf8;border-radius:2.5px"></div>
<svg style="left:1232px;top:510.2px;" width="11" height="9" viewBox="0 0 11 9"><path d="M1.100 5l3.300 2.600L9.900 1.300" fill="none" stroke="#fff" stroke-width="1.250"/></svg>
<span class="t" style="top:504.89px;font-size:14px;line-height:20px;color:#62a0fa;left:1251.2px;">电子文档</span>
<span class="t" style="top:548.99px;font-size:14px;line-height:20px;color:#2f2f2f;left:319.70000000000005px;width:400px;text-align:right;">简要说明</span>
<div style="left:731px;top:541px;width:610px;height:96px;background:#fff;border:1px solid #c9c9c9"></div>
<span class="t" style="top:652.19px;font-size:14px;line-height:20px;color:#2f2f2f;left:319.70000000000005px;width:400px;text-align:right;">单号</span>
<div class="inp dis" style="left:731.2px;top:644.3px;width:609.6px;height:32.8px;"></div>
<span class="t" style="top:651.79px;font-size:14px;line-height:20px;color:#1f1f1f;left:737.2px;">WDZL20250000008</span>
<div class="btn" style="left:926.3px;top:688.1px;width:65.5px;height:28.6px;background:#e4f0fd;border-color:#6cc8e0"></div>
<svg style="left:937.8px;top:696px" width="13" height="13" viewBox="0 0 13 13"><circle cx="6.500" cy="6.500" r="5.700" fill="none" stroke="#4cb08c" stroke-width="1.100"/><path d="M3.800 6.600l2 2 3.500-3.800" fill="none" stroke="#4cb08c" stroke-width="1.100"/></svg>
<span class="t" style="top:693.09px;font-size:14px;line-height:20px;color:#1f1f1f;left:953.5px;">保存</span>
<div class="btn" style="left:1000.1px;top:688.1px;width:65.5px;height:28.6px;background:#e4f0fd;border-color:#6cc8e0"></div>
<svg style="left:1011px;top:696px" width="13" height="13" viewBox="0 0 13 13"><circle cx="6.500" cy="6.500" r="5.700" fill="none" stroke="#f5782e" stroke-width="1.150"/><path d="M4.600 4.600l3.800 3.800M8.400 4.600l-3.800 3.800" fill="none" stroke="#f5782e" stroke-width="1.100"/></svg>
<span class="t" style="top:693.09px;font-size:14px;line-height:20px;color:#1f1f1f;left:1027.3px;">关闭</span>
</div>
</body></html>
